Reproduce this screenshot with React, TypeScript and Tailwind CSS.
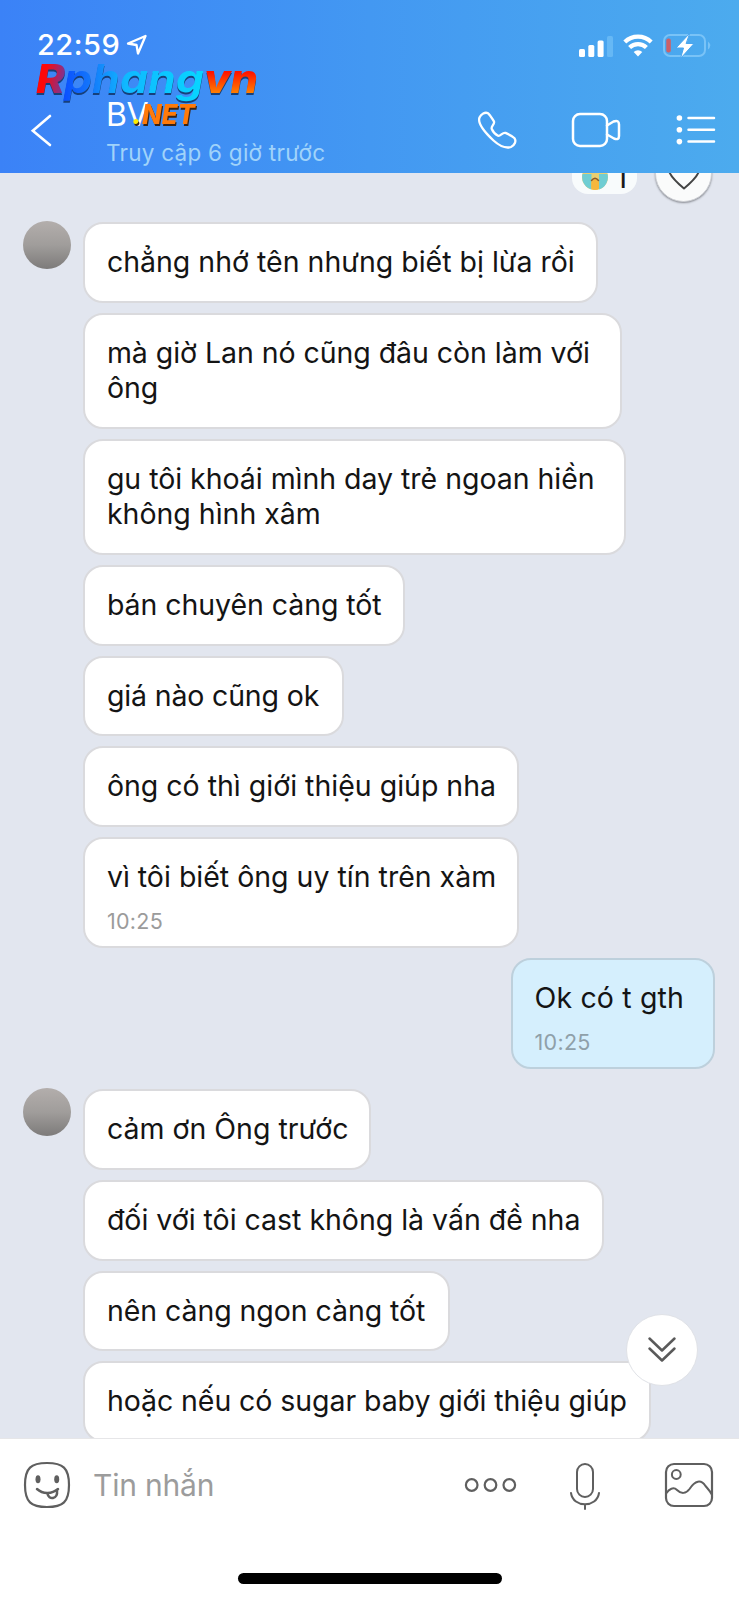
import { ReactNode } from "react";

type Message = {
  lines: { text: string; tracking?: string }[];
  width: string;
  time?: string;
  mine?: boolean;
  avatar?: boolean;
};

const messages: Message[] = [
  {
    lines: [{ text: "chẳng nhớ tên nhưng biết bị lừa rồi" }],
    width: "w-[515px]",
    avatar: true,
  },
  {
    lines: [{ text: "mà giờ Lan nó cũng đâu còn làm với", tracking: "tracking-[-0.05px]" }, { text: "ông" }],
    width: "w-[539px]",
  },
  {
    lines: [{ text: "gu tôi khoái mình day trẻ ngoan hiền", tracking: "tracking-[-0.03px]" }, { text: "không hình xâm" }],
    width: "w-[543px]",
  },
  { lines: [{ text: "bán chuyên càng tốt", tracking: "tracking-[-0.06px]" }], width: "w-[322px]" },
  { lines: [{ text: "giá nào cũng ok", tracking: "tracking-[-0.15px]" }], width: "w-[261px]" },
  { lines: [{ text: "ông có thì giới thiệu giúp nha" }], width: "w-[436px]" },
  { lines: [{ text: "vì tôi biết ông uy tín trên xàm" }], width: "w-[436px]", time: "10:25" },
  {
    lines: [{ text: "Ok có t gth", tracking: "tracking-[0.15px]" }],
    width: "w-[204px]",
    time: "10:25",
    mine: true,
  },
  { lines: [{ text: "cảm ơn Ông trước" }], width: "w-[288px]", avatar: true },
  {
    lines: [{ text: "đối với tôi cast không là vấn đề nha", tracking: "tracking-[-0.02px]" }],
    width: "w-[521px]",
  },
  { lines: [{ text: "nên càng ngon càng tốt", tracking: "tracking-[-0.06px]" }], width: "w-[367px]" },
  {
    lines: [{ text: "hoặc nếu có sugar baby giới thiệu giúp", tracking: "tracking-[-0.07px]" }],
    width: "w-[568px]",
  },
];

function Icon({ w, h, className, children }: { w: number; h: number; className?: string; children: ReactNode }) {
  return (
    <svg
      width={w}
      height={h}
      viewBox={`0 0 ${w} ${h}`}
      fill="none"
      stroke="currentColor"
      strokeWidth="2"
      strokeLinecap="round"
      strokeLinejoin="round"
      className={`block shrink-0 ${className ?? ""}`}
    >
      {children}
    </svg>
  );
}

function Bubble({ message }: { message: Message }) {
  const { lines, width, time, mine, avatar } = message;
  return (
    <div className={`flex shrink-0 items-start ${mine ? "mb-[20.6px] justify-end pr-[24px]" : "mb-[10px] pl-[23.4px]"}`}>
      {!mine && (
        <div className="w-[60px] shrink-0">
          {avatar && (
            <div className="h-[47.5px] w-[47.5px] -translate-y-px rounded-full bg-linear-to-b from-[#b3aeac] via-[#a09d9b] to-[#7d7b7a]" />
          )}
        </div>
      )}
      <div
        className={`shrink-0 rounded-[20px] border-2 pt-[20px] pl-[21.5px] ${width} ${
          mine ? "border-[#bdd0dc] bg-[#d5effd]" : "border-[#dadadd] bg-white"
        } ${time ? "h-[110.8px]" : lines.length > 1 ? "h-[116.2px]" : "h-[80.7px]"}`}
      >
        {lines.map((line) => (
          <p
            key={line.text}
            className={`text-[28.5px] leading-[35.6px] whitespace-nowrap text-[#141414] ${line.tracking ?? ""}`}
          >
            {line.text}
          </p>
        ))}
        {time && (
          <p className={`mt-[13px] text-[21.5px] leading-[26px] tracking-[0.3px] ${mine ? "text-[#8fa0a9]" : "text-[#9b9b9b]"}`}>
            {time}
          </p>
        )}
      </div>
    </div>
  );
}

function Watermark() {
  return (
    <svg className="absolute top-[55px] left-[30px]" width="240" height="80" viewBox="30 54 240 80" fontFamily="Inter, sans-serif">
      <defs>
        <linearGradient id="wm-r" x1="0" x2="1" y1="0.3" y2="0.6">
          <stop offset="0.3" stopColor="#ff0808" />
          <stop offset="1" stopColor="#6a3aa8" />
        </linearGradient>
        <linearGradient id="wm-mid" x1="64" x2="200" y1="0" y2="0" gradientUnits="userSpaceOnUse">
          <stop offset="0" stopColor="#0a50ff" />
          <stop offset="0.2" stopColor="#1478fa" />
          <stop offset="0.45" stopColor="#10b8ff" />
          <stop offset="1" stopColor="#08d4ff" />
        </linearGradient>
        <linearGradient id="wm-vn" x1="0" x2="0" y1="71" y2="94" gradientUnits="userSpaceOnUse">
          <stop offset="0" stopColor="#ff1200" />
          <stop offset="1" stopColor="#ff8a00" />
        </linearGradient>
      </defs>
      <g fontWeight="700" fontStyle="italic" fontSize="39.5" className="drop-shadow-[0_2px_0_#17407a]">
        <text x="36" y="92" textLength="29" lengthAdjust="spacingAndGlyphs" fontWeight="800" fill="url(#wm-r)">R</text>
        <text x="64" y="92" textLength="140" lengthAdjust="spacingAndGlyphs" fill="url(#wm-mid)">phang</text>
        <text x="204" y="92" textLength="54" lengthAdjust="spacingAndGlyphs" fontWeight="800" fill="url(#wm-vn)">vn</text>
      </g>
      <g fontWeight="800" fontStyle="italic" fontSize="27" className="drop-shadow-[1px_2px_0_#3a2418]">
        <text x="132" y="122.5" fill="#ffee00">.</text>
        <text x="142" y="122.5" textLength="53" lengthAdjust="spacingAndGlyphs" fill="#ff7a0a">NET</text>
      </g>
    </svg>
  );
}

function Header() {
  return (
    <header className="relative z-10 flex h-[173px] shrink-0 flex-col bg-linear-to-r from-[#3b82f7] via-[#4398f2] to-[#4cabee] text-white">
      <div className="flex h-[90px] items-start justify-between pt-[27px] pr-[28px] pl-[37px]">
        <div className="flex items-center">
          <span className="text-[29px] leading-[36px] font-medium tracking-[0.5px]">22:59</span>
          <Icon w={22} h={22} className="ml-[6px]">
            <path d="M2 9.5 L19.5 2 L12 19.5 L10.5 11 Z" strokeWidth="2.3" />
          </Icon>
        </div>
        <div className="flex items-center pt-[6px]">
          <Icon w={34} h={24}>
            <g fill="currentColor" stroke="none">
              <rect x="0" y="15" width="6" height="8" rx="1.5" />
              <rect x="9.3" y="11" width="6" height="12" rx="1.5" />
              <rect x="18.6" y="6.5" width="6" height="16.5" rx="1.5" />
              <rect x="28" y="2" width="6" height="21" rx="1.5" fill="#66b8f5" />
            </g>
          </Icon>
          <Icon w={30} h={24} className="ml-[10px]">
            <g strokeWidth="4.2" strokeLinecap="butt">
              <path d="M1.8 8 A19 19 0 0 1 28.2 8" />
              <path d="M6.6 13.6 A12 12 0 0 1 23.4 13.6" />
            </g>
            <path d="M15 22.4 L10.7 18 A6.2 6.2 0 0 1 19.3 18 Z" fill="currentColor" stroke="none" />
          </Icon>
          <Icon w={48} h={26} className="ml-[10px]">
            <rect x="1" y="2" width="41" height="21" rx="6" stroke="#79c3f7" />
            <path d="M45 8.5 Q49.5 12.5 45 16.5 Z" fill="#79c3f7" stroke="none" />
            <rect x="3.3" y="5.5" width="4.5" height="14" rx="2" fill="#cd6068" stroke="none" />
            <path d="M26.5 0.5 L13 15 H20.5 L17.5 25.5 L31 10.5 H23.5 Z" fill="currentColor" stroke="#4aa5ef" strokeWidth="1" />
          </Icon>
        </div>
      </div>
      <div className="flex items-start pl-[30px]">
        <Icon w={22} h={34} className="mt-[23px]">
          <path d="M20 3 L2.8 17.8 L20 32" strokeWidth="2.6" strokeLinejoin="miter" />
        </Icon>
        <div className="ml-[54px] flex w-[371px] flex-col pt-[5px]">
          <span className="text-[32px] leading-[40px] font-normal tracking-[-0.5px]">BV</span>
          <span className="mt-[4px] text-[22.5px] leading-[28px] font-normal tracking-[0.25px] whitespace-nowrap text-[#a0d3fa]">
            Truy cập 6 giờ trước
          </span>
        </div>
        <Icon w={40} h={40} className="mt-[21px]">
          <path
            d="M2.5 6.5 C4 3 8 0.8 11 2.2 C13.5 4 15 7.5 17 10.5 C18 13.5 13.5 15.5 14.8 18 C16 21 18.5 23.5 21 24.7 C23.5 25.5 25.5 21 28.5 21.9 C31.5 23.3 35 25 37.3 27 C39.8 30 37.5 34.5 34 36 C29 37.5 22 34.5 16.5 29.5 C8.5 22 0 13 2.5 6.5 Z"
            strokeWidth="2.3"
          />
        </Icon>
        <Icon w={50} h={38} className="mt-[21px] ml-[54px]">
          <rect x="2" y="3" width="34" height="32" rx="7" strokeWidth="2.5" />
          <path d="M36 14.5 L42.5 10.5 Q48 8.5 48 13.5 V25 Q48 29.5 43 27.5 L36 23.5" strokeWidth="2.5" />
        </Icon>
        <Icon w={42} h={34} className="mt-[23px] ml-[54px]">
          <g fill="currentColor" stroke="none">
            <circle cx="4.4" cy="5" r="2.8" />
            <circle cx="4.4" cy="16.8" r="2.8" />
            <circle cx="4.4" cy="28.6" r="2.8" />
          </g>
          <path d="M13.5 5 H39 M13.5 16.8 H39 M13.5 28.6 H39" strokeWidth="2.5" />
        </Icon>
      </div>
      <Watermark />
    </header>
  );
}

// Reaction pill and like button, half hidden below the header
function Reactions() {
  return (
    <div className="flex h-[49px] shrink-0 items-start justify-end pr-[27px]">
      <div className="-mt-[14px] flex h-[35px] w-[65px] items-center rounded-[16px] bg-[#f8fbfc]">
        <Icon w={28} h={28} className="ml-[9px]">
          <circle cx="14" cy="14" r="13" fill="#e9cf72" stroke="none" />
          <path d="M1.5 11 L10.5 11 V26.5 A13 13 0 0 1 1.5 11 Z M26.5 11 L18 11 V26.5 A13 13 0 0 0 26.5 11 Z" fill="#6fcdd3" stroke="none" />
          <path d="M10.2 26 V19 Q14 12 18 19 V26 Q14 28 10.2 26 Z" fill="#f6b73c" stroke="none" />
          <path d="M10.5 17.5 Q14 13 17.5 17.5" stroke="#8a5a2c" strokeWidth="1.5" />
        </Icon>
        <span className="ml-[6px] text-[30px] leading-[30px] text-[#1b1b1b]">1</span>
      </div>
      <div className="-mt-[28px] ml-[18px] flex h-[57px] w-[57px] items-center justify-center rounded-full border border-[#cfd1d6] bg-[#fafbfb] shadow-[0_1px_2px_#8a8d94]">
        <Icon w={36} h={30} className="mt-[2px] text-[#444]">
          <path d="M18 28.5 C9 21 2.5 14 2.5 8.5 C2.5 1 13 -1 18 6 C23 -1 33.5 1 33.5 8.5 C33.5 14 27 21 18 28.5 Z" />
        </Icon>
      </div>
    </div>
  );
}

function Composer() {
  return (
    <footer className="relative flex h-[162px] shrink-0 flex-col border-t border-[#e6e6e8] bg-white text-[#5f5f5f]">
      <div className="flex h-[92px] items-center pr-[25px] pl-[23px]">
        <Icon w={48} h={48}>
          <path d="M24 2 C40 2 46 7 46 24 C46 41 40 46 24 46 C8 46 2 41 2 24 C2 7 8 2 24 2 Z" strokeWidth="2.2" />
          <ellipse cx="15" cy="18.2" rx="2.5" ry="4" fill="currentColor" stroke="none" />
          <ellipse cx="33.7" cy="18.2" rx="2.5" ry="4" fill="currentColor" stroke="none" />
          <path d="M14 28 C20 33.5 29 33 35 28" strokeWidth="2.5" />
          <path d="M24.5 32.5 C25.5 39.5 35 38.5 34 29.5" strokeWidth="2.5" />
        </Icon>
        <span className="ml-[22px] w-[370px] text-[30px] leading-[40px] font-normal tracking-[-0.2px] text-[#9c9c9c]">Tin nhắn</span>
        <Icon w={54} h={18}>
          <g strokeWidth="2.2">
            <circle cx="8.7" cy="9" r="5.8" />
            <circle cx="27.5" cy="9" r="5.8" />
            <circle cx="46.3" cy="9" r="5.8" />
          </g>
        </Icon>
        <Icon w={34} h={50} className="mt-[4px] ml-[51px]">
          <rect x="9" y="2" width="16" height="33" rx="8" />
          <path d="M3 31 C5 46 29 46 31 31 M17 42.5 V47" />
        </Icon>
        <Icon w={50} h={46} className="ml-[62px]">
          <rect x="2" y="2" width="46" height="42" rx="8" strokeWidth="2.2" />
          <circle cx="12.3" cy="12.5" r="4.4" />
          <path d="M2.5 31 C5 27 9.5 24.5 13 28 C17 32 22 32 25.5 27 C31 18.5 37 17 41.5 24 C44 27 46 29 47.5 32" />
        </Icon>
      </div>
      <div className="mt-[42px] ml-[238px] h-[11px] w-[264px] rounded-full bg-black" />
      <div className="absolute -top-[125px] left-[626px] flex h-[72px] w-[72px] items-center justify-center rounded-full border border-[#e0e2e7] bg-white text-[#5a5a5a]">
        <Icon w={30} h={28}>
          <path d="M2.5 2.5 L15 14.5 L27.5 2.5 M2.5 12.5 L15 24.5 L27.5 12.5" strokeWidth="2.5" />
        </Icon>
      </div>
    </footer>
  );
}

export default function App() {
  return (
    <div className="flex h-[1600px] w-[739px] flex-col overflow-hidden bg-[#e2e6ef] font-[Inter,'Noto_Sans',sans-serif]">
      <Header />
      <main className="flex min-h-0 flex-1 flex-col overflow-hidden">
        <Reactions />
        {messages.map((message) => (
          <Bubble key={message.lines[0].text} message={message} />
        ))}
      </main>
      <Composer />
    </div>
  );
}
